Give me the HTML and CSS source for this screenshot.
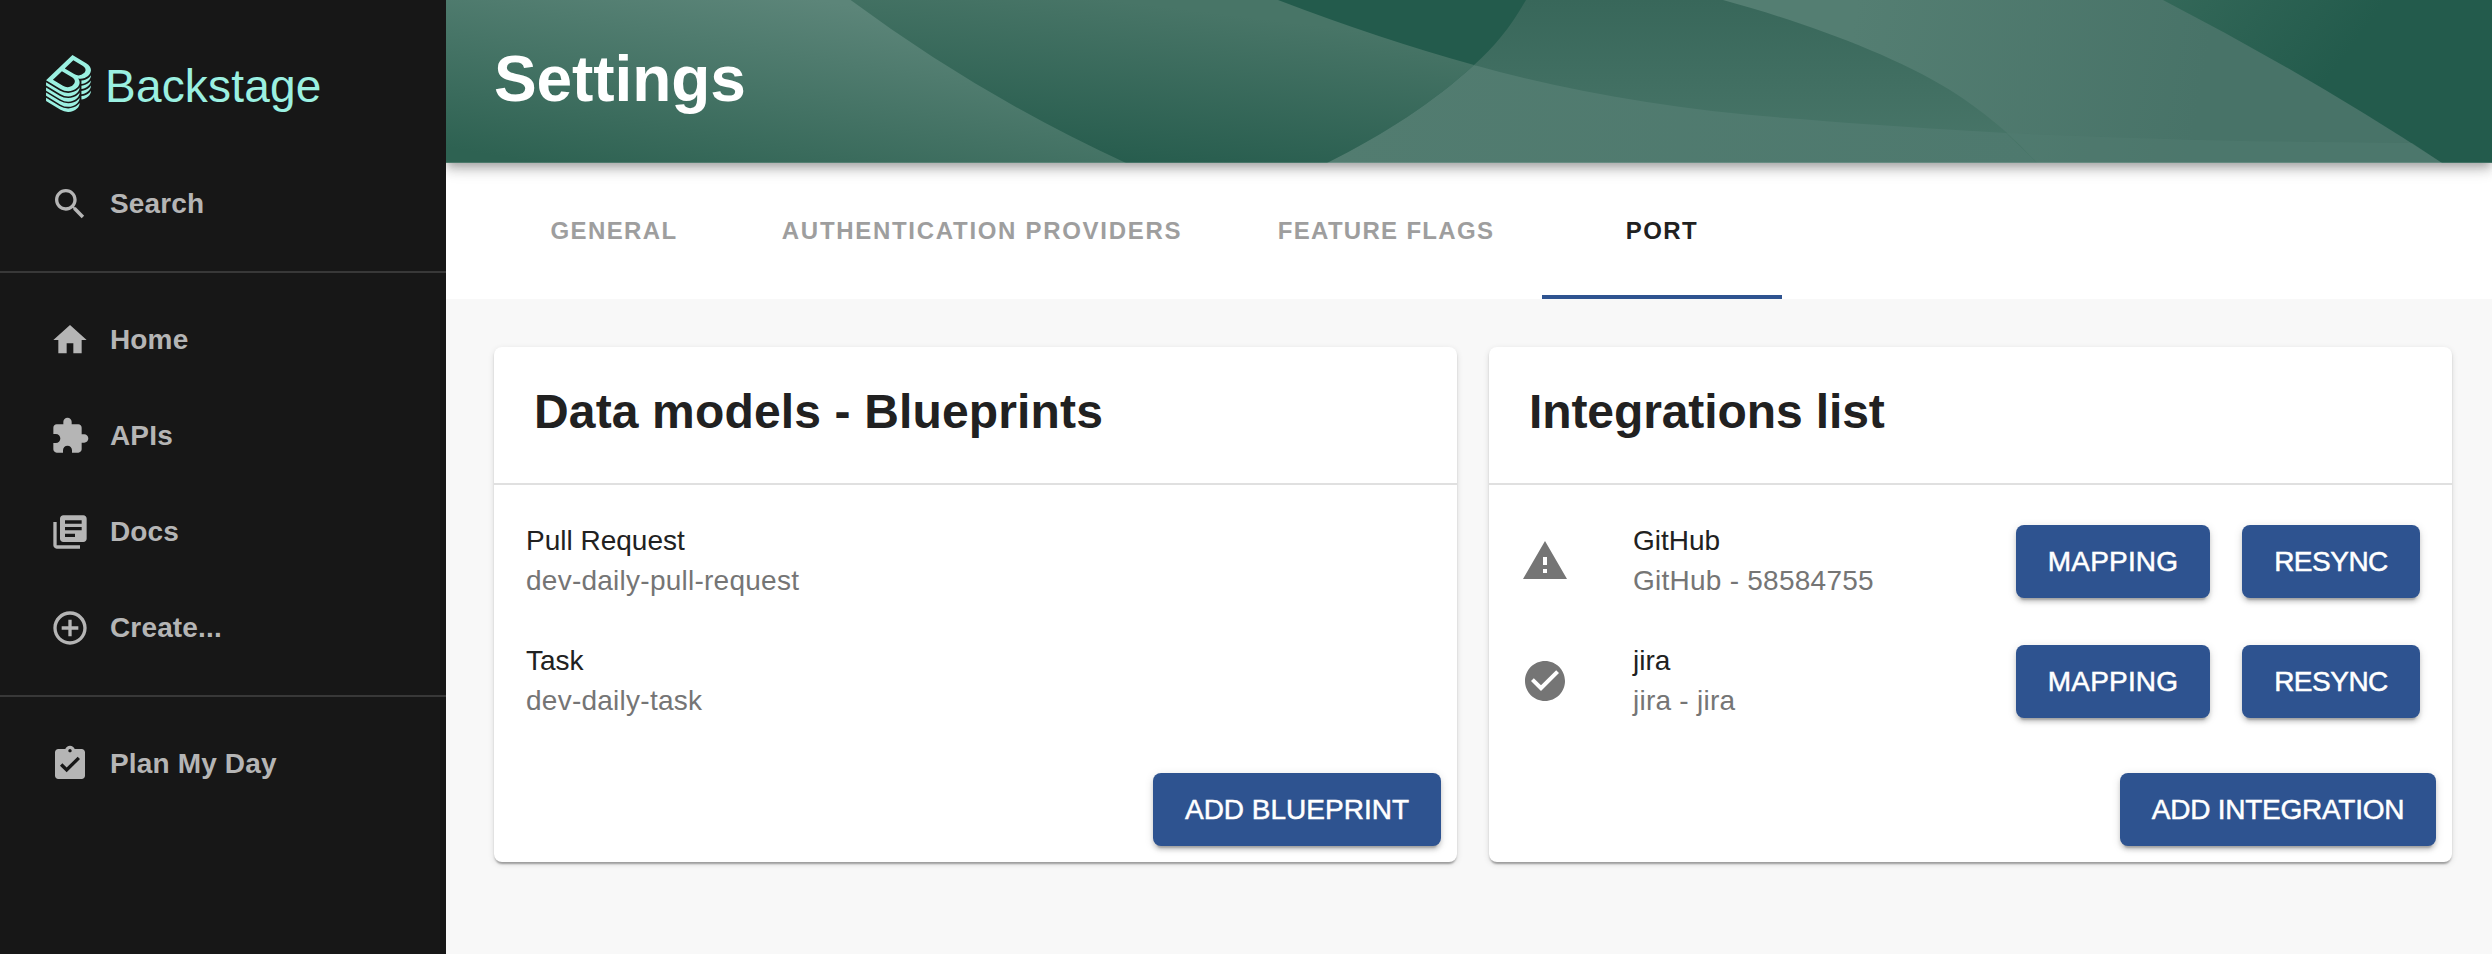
FILE: index.html
```html
<!DOCTYPE html>
<html lang="en">
<head>
<meta charset="utf-8">
<title>Settings</title>
<link rel="stylesheet" href="styles.css">
</head>
<body>
<div class="app">
  <nav class="sidebar">
    <div class="brand">
      <svg class="brand-icon" viewBox="0 0 337.46 428.5">
        <defs>
          <path id="slice" d="M241.24,333.68c-19.57,18.75-46.17,29.09-74.88,29.09a123.73,123.73,0,0,1-64.1-18.2L0,282.52v24.67L108.6,373.1a111.6,111.6,0,0,0,57.76,16.42c24.92,0,48.8-8.81,66.42-25.69,12.88-12.34,20-27.13,19.68-41.49v-1.79A87.27,87.27,0,0,1,241.24,333.68Z"/>
          <path id="edge" d="M266,217.2a85,85,0,0,0,24.2-5.7a81,81,0,0,0,26.3-16.8c14-13.5,21-26,20.9-41.5v-1a87,87,0,0,1-12,14.5c-15,15-36,23-59.4,25.3Z"/>
        </defs>
        <path d="M303,166.05a80.69,80.69,0,0,0,13.45-10.37c.79-.77,1.55-1.53,2.3-2.3a83.12,83.12,0,0,0,7.93-9.38A63.69,63.69,0,0,0,333,133.23a48.58,48.58,0,0,0,4.35-16.4c1.49-19.39-10-38.67-35.62-54.22L198.56,0,78.3,115.23,0,190.25l108.6,65.91a111.59,111.59,0,0,0,57.76,16.41c24.92,0,48.8-8.8,66.42-25.69,19.16-18.36,25.52-42.12,13.7-61.87a49.22,49.22,0,0,0-6.8-8.87A89.17,89.17,0,0,0,259,178.29h.15a85.08,85.08,0,0,0,31-5.79A80.88,80.88,0,0,0,303,166.05ZM202.45,225.86c-19.32,18.51-50.4,21.23-75.7,5.9L51.61,186.15l67.45-64.64,76.41,46.38C223,184.58,221.49,207.61,202.45,225.86Zm8.93-82.22-70.65-42.89L205.14,39,274.51,81.1c25.94,15.72,29.31,37,10.55,55A60.69,60.69,0,0,1,211.38,143.64Z"/>
        <use href="#slice" y="-78"/><use href="#slice" y="-39"/><use href="#slice"/><use href="#slice" y="39"/>
        <use href="#edge"/><use href="#edge" y="39"/><use href="#edge" y="78"/><use href="#edge" y="117"/>
      </svg>
      <span class="brand-name">Backstage</span>
    </div>
    <a class="nav-item"><svg class="nav-icon" viewBox="0 0 24 24"><path d="M15.5 14h-.79l-.28-.27C15.41 12.59 16 11.11 16 9.5 16 5.91 13.09 3 9.5 3S3 5.91 3 9.5 5.91 16 9.5 16c1.61 0 3.09-.59 4.23-1.57l.27.28v.79l5 4.99L20.49 19l-4.99-5zm-6 0C7.01 14 5 11.99 5 9.5S7.01 5 9.5 5 14 7.01 14 9.5 11.99 14 9.5 14z"/></svg>Search</a>
    <hr class="nav-divider">
    <a class="nav-item"><svg class="nav-icon" viewBox="0 0 24 24"><path d="M10 20v-6h4v6h5v-8h3L12 3 2 12h3v8z"/></svg>Home</a>
    <a class="nav-item"><svg class="nav-icon" viewBox="0 0 24 24"><path d="M20.5 11H19V7c0-1.1-.9-2-2-2h-4V3.5C13 2.12 11.88 1 10.5 1S8 2.12 8 3.5V5H4c-1.1 0-1.99.9-1.99 2v3.8H3.5c1.49 0 2.7 1.21 2.7 2.7s-1.21 2.7-2.7 2.7H2V20c0 1.1.9 2 2 2h3.8v-1.5c0-1.49 1.21-2.7 2.7-2.7 1.49 0 2.7 1.21 2.7 2.7V22H17c1.1 0 2-.9 2-2v-4h1.5c1.38 0 2.5-1.12 2.5-2.5S21.88 11 20.5 11z"/></svg>APIs</a>
    <a class="nav-item"><svg class="nav-icon" viewBox="0 0 24 24"><path d="M4 6H2v14c0 1.1.9 2 2 2h14v-2H4V6zm16-4H8c-1.1 0-2 .9-2 2v12c0 1.1.9 2 2 2h12c1.1 0 2-.9 2-2V4c0-1.1-.9-2-2-2zm-1 9H9V9h10v2zm-4 4H9v-2h6v2zm4-8H9V5h10v2z"/></svg>Docs</a>
    <a class="nav-item"><svg class="nav-icon" viewBox="0 0 24 24"><path d="M13 7h-2v4H7v2h4v4h2v-4h4v-2h-4V7zm-1-5C6.48 2 2 6.48 2 12s4.48 10 10 10 10-4.48 10-10S17.52 2 12 2zm0 18c-4.41 0-8-3.59-8-8s3.59-8 8-8 8 3.59 8 8-3.59 8-8 8z"/></svg>Create...</a>
    <hr class="nav-divider">
    <a class="nav-item"><svg class="nav-icon" viewBox="0 0 24 24"><path d="M19 3h-4.18C14.4 1.84 13.3 1 12 1c-1.3 0-2.4.84-2.82 2H5c-1.1 0-2 .9-2 2v14c0 1.1.9 2 2 2h14c1.1 0 2-.9 2-2V5c0-1.1-.9-2-2-2zm-7 0c.55 0 1 .45 1 1s-.45 1-1 1-1-.45-1-1 .45-1 1-1zm-2 14l-4-4 1.41-1.41L10 14.17l6.59-6.59L18 9l-8 8z"/></svg>Plan My Day</a>
  </nav>

  <div class="page">
    <header class="page-header">
      <svg class="header-art" viewBox="446 0 2046 163" preserveAspectRatio="none">
        <defs>
          <linearGradient id="g-left" gradientUnits="userSpaceOnUse" x1="760" y1="-10" x2="725" y2="195"><stop offset="0" stop-color="#5c8579"/><stop offset="1" stop-color="#2e6252"/></linearGradient>
          <linearGradient id="g-mid" gradientUnits="userSpaceOnUse" x1="1110" y1="0" x2="1090" y2="163"><stop offset="0" stop-color="#487567"/><stop offset="1" stop-color="#265c4d"/></linearGradient>
          <linearGradient id="g-lens" x1="0" y1="0" x2="0" y2="1"><stop offset="0" stop-color="#38675a"/><stop offset="1" stop-color="#4a776a"/></linearGradient>
          <linearGradient id="g-low" x1="0" y1="0" x2="1" y2="0"><stop offset="0" stop-color="#527c70"/><stop offset="1" stop-color="#4e796e"/></linearGradient>
          <linearGradient id="g-band" gradientUnits="userSpaceOnUse" x1="1850" y1="40" x2="2200" y2="100"><stop offset="0" stop-color="#547e72"/><stop offset="1" stop-color="#487368"/></linearGradient>
          <linearGradient id="g-right" gradientUnits="userSpaceOnUse" x1="2170" y1="-20" x2="2320" y2="90"><stop offset="0" stop-color="#346859"/><stop offset="1" stop-color="#235b4c"/></linearGradient>
        </defs>
        <rect x="446" width="2046" height="163" fill="#235b4c"/>
        <path fill="url(#g-right)" d="M2100 0H2492V163H2300Z"/>
        <path fill="url(#g-mid)" d="M800 0H1278Q1380 39 1474 65C1435 101 1385 134 1327 163H1000Z"/>
        <path fill="url(#g-left)" d="M446 0H850.6Q980 96 1126 163H446Z"/>
        <path fill="url(#g-band)" d="M1700 0H2163Q2308 75 2442 163H1950Z"/>
        <path fill="url(#g-lens)" d="M1526 0H1723C1800 21 1890 53 1950 90C1985 112 2015 138 2037 163H1700L1474 65C1494 47 1510 28 1526 0Z"/>
        <path fill="url(#g-low)" d="M1474 65C1570 92 1680 111 1800 119C1870 125 1940 129 2006 133L2037 163H1327C1385 134 1435 101 1474 65Z"/>
        <path fill="#527c71" fill-opacity=".45" d="M2006 133C2140 139 2260 142 2412 143L2442 163H2037Q2023 147 2006 133Z"/>
        <path fill="#fff" fill-opacity=".14" d="M446 162H2492V163H446Z"/>
      </svg>
      <h1 class="page-title">Settings</h1>
    </header>

    <div class="tabs">
      <a class="tab tab-general">General</a>
      <a class="tab tab-auth">Authentication Providers</a>
      <a class="tab tab-flags">Feature Flags</a>
      <a class="tab tab-port active">Port</a>
    </div>

    <main class="content">
      <section class="card">
        <h2 class="card-title">Data models - Blueprints</h2>
        <div class="list">
          <div class="row"><div class="row-text"><div>Pull Request</div><div class="secondary">dev-daily-pull-request</div></div></div>
          <div class="row"><div class="row-text"><div>Task</div><div class="secondary">dev-daily-task</div></div></div>
        </div>
        <div class="card-actions"><button class="btn btn-blueprint">Add Blueprint</button></div>
      </section>

      <section class="card">
        <h2 class="card-title card-title-tight">Integrations list</h2>
        <div class="list">
          <div class="row">
            <span class="status"><svg class="status-icon" viewBox="0 0 24 24"><path d="M1 21h22L12 2 1 21zm12-3h-2v-2h2v2zm0-4h-2v-4h2v4z"/></svg></span>
            <div class="row-text"><div>GitHub</div><div class="secondary">GitHub - 58584755</div></div>
            <button class="btn btn-mapping">Mapping</button><button class="btn btn-resync">Resync</button>
          </div>
          <div class="row">
            <span class="status"><svg class="status-icon" viewBox="0 0 24 24"><path d="M12 2C6.48 2 2 6.48 2 12s4.48 10 10 10 10-4.48 10-10S17.52 2 12 2zm-2 15l-5-5 1.41-1.41L10 14.17l7.59-7.59L19 8l-9 9z"/></svg></span>
            <div class="row-text"><div>jira</div><div class="secondary">jira - jira</div></div>
            <button class="btn btn-mapping">Mapping</button><button class="btn btn-resync">Resync</button>
          </div>
        </div>
        <div class="card-actions"><button class="btn btn-integration">Add Integration</button></div>
      </section>
    </main>
  </div>
</div>
</body>
</html>
```
FILE: styles.css
```css
* { box-sizing: border-box; }
body {
  margin: 0;
  font-family: "Liberation Sans", Arial, sans-serif;
  color: #212121;
  background: #f8f8f8;
}
.app { display: flex; height: 954px; overflow: hidden; }

.sidebar { width: 446px; flex: none; background: #171717; }
.brand {
  display: flex;
  gap: 14px;
  height: 156px;
  padding: 55px 0 0 46px;
  color: #9bf0e1;
}
.brand-icon { width: 45px; height: 57px; fill: currentColor; }
.brand-name { font-size: 46px; line-height: 62px; letter-spacing: .2px; }
.nav-item {
  display: flex;
  align-items: center;
  gap: 20px;
  height: 96px;
  padding-left: 50px;
  font-size: 28px;
  font-weight: 700;
  letter-spacing: .15px;
  color: #b5b5b5;
}
.nav-icon { width: 40px; height: 40px; fill: currentColor; }
.nav-divider { height: 2px; margin: 19px 0; border: 0; background: #383838; }

.page { flex: 1; min-width: 0; }
.page-header {
  position: relative;
  z-index: 1;
  display: flex;
  align-items: center;
  height: 163px;
  padding: 0 0 5px 48px;
  box-shadow: 0 4px 8px -2px rgba(0,0,0,.2), 0 8px 10px 0 rgba(0,0,0,.14), 0 2px 20px 0 rgba(0,0,0,.12);
  clip-path: inset(0 0 -40px 0);
}
.header-art { position: absolute; inset: 0; width: 100%; height: 100%; }
.page-title { position: relative; margin: 0; font-size: 64px; line-height: 80px; letter-spacing: -.1px; color: #fff; }

.tabs { display: flex; height: 136px; padding-left: 48px; background: #fff; }
.tab {
  display: flex;
  align-items: center;
  justify-content: center;
  border: solid transparent;
  border-width: 4px 0;
  font-size: 24px;
  font-weight: 700;
  text-transform: uppercase;
  white-space: nowrap;
  color: #9e9e9e;
}
.tab-general { width: 240px; letter-spacing: 1.4px; }
.tab-auth { width: 496px; letter-spacing: 1.7px; }
.tab-flags { width: 312px; letter-spacing: 1.3px; }
.tab-port { width: 240px; letter-spacing: 1.4px; }
.tab.active { color: #212121; border-bottom-color: #2e5390; }

.content { display: flex; gap: 32px; padding: 48px 40px 0 48px; }
.card {
  flex: 1;
  height: 515px;
  border-radius: 8px;
  background: #fff;
  box-shadow: 0 4px 2px -2px rgba(0,0,0,.2), 0 2px 2px 0 rgba(0,0,0,.14), 0 2px 6px 0 rgba(0,0,0,.12);
}
.card-title {
  height: 138px;
  margin: 0;
  padding: 35px 40px 0;
  border-bottom: 2px solid #e0e0e0;
  font-size: 48px;
  line-height: 60px;
  letter-spacing: .15px;
}
.card-title-tight { letter-spacing: -.1px; }
.list { padding: 16px 32px 0; }
.row { display: flex; align-items: center; height: 120px; }
.row-text { flex: 1; font-size: 28px; line-height: 40px; }
.secondary { letter-spacing: .25px; color: #757575; }
.status { display: flex; width: 112px; }
.status-icon { width: 48px; height: 48px; fill: #757575; }
.card-actions { display: flex; justify-content: flex-end; padding: 32px 16px 0; }
.btn {
  height: 73px;
  padding: 1px 0 0;
  border: 0;
  border-radius: 8px;
  background: #2e5390;
  color: #fff;
  font-family: inherit;
  font-size: 28px;
  text-transform: uppercase;
  white-space: nowrap;
  -webkit-text-stroke: .5px #fff;
  box-shadow: 0 6px 2px -4px rgba(0,0,0,.2), 0 4px 4px 0 rgba(0,0,0,.14), 0 2px 10px 0 rgba(0,0,0,.12);
}
.btn-mapping { width: 194px; letter-spacing: .2px; }
.btn-resync { width: 178px; margin-left: 32px; letter-spacing: -.5px; }
.btn-blueprint { width: 288px; }
.btn-integration { width: 316px; letter-spacing: -.25px; }
```
